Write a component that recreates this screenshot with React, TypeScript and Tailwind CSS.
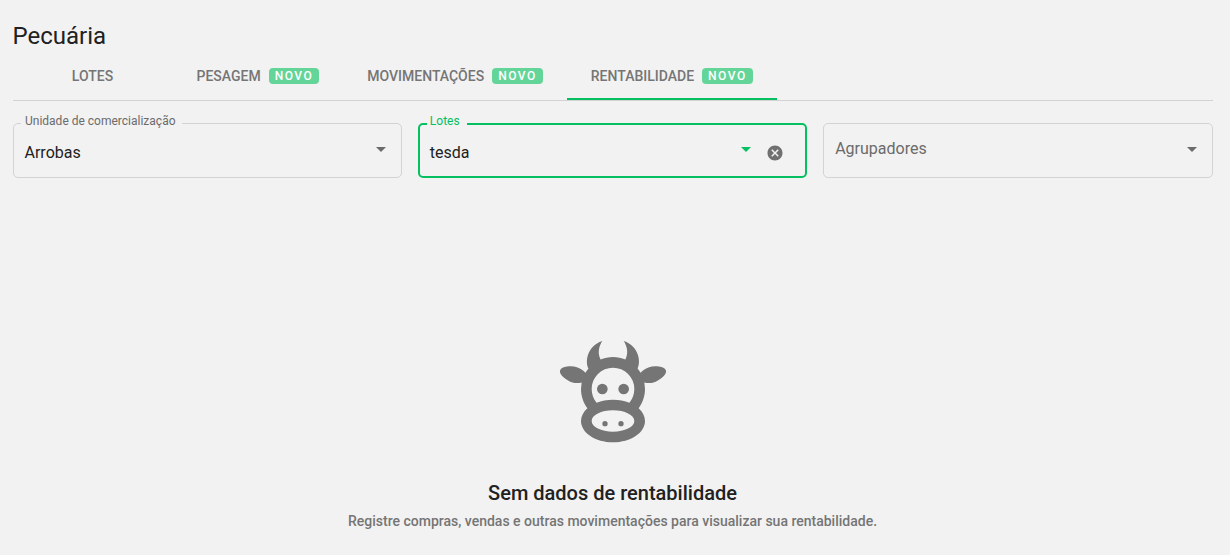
import clsx from "clsx";

const COW_PATH =
	"M10.5,18A0.5,0.5 0 0,1 11,18.5A0.5,0.5 0 0,1 10.5,19A0.5,0.5 0 0,1 10,18.5A0.5,0.5 0 0,1 10.5,18M13.5,18A0.5,0.5 0 0,1 14,18.5A0.5,0.5 0 0,1 13.5,19A0.5,0.5 0 0,1 13,18.5A0.5,0.5 0 0,1 13.5,18M10,11A1,1 0 0,1 11,12A1,1 0 0,1 10,13A1,1 0 0,1 9,12A1,1 0 0,1 10,11M14,11A1,1 0 0,1 15,12A1,1 0 0,1 14,13A1,1 0 0,1 13,12A1,1 0 0,1 14,11M18,18C18,20.21 15.31,22 12,22C8.69,22 6,20.21 6,18C6,17.1 6.45,16.27 7.2,15.6C6.45,14.6 6,13.35 6,12L6.12,10.78C5.58,10.93 4.93,10.93 4.4,10.78C3.38,10.5 1.84,9.35 2.07,8.55C2.3,7.75 4.21,7.6 5.23,7.9C5.82,8.07 6.45,8.5 6.82,8.96L7.39,8.15C6.79,7.05 7,4 10,3L9.91,3.14V3.14C9.63,3.58 8.91,4.97 9.67,6.47C10.39,6.17 11.17,6 12,6C12.83,6 13.61,6.17 14.33,6.47C15.09,4.97 14.37,3.58 14.09,3.14L14,3C17,4 17.21,7.05 16.61,8.15L17.18,8.96C17.55,8.5 18.18,8.07 18.77,7.9C19.79,7.6 21.7,7.75 21.93,8.55C22.16,9.35 20.62,10.5 19.6,10.78C19.07,10.93 18.42,10.93 17.88,10.78L18,12C18,13.35 17.55,14.6 16.8,15.6C17.55,16.27 18,17.1 18,18M12,16C9.79,16 8,16.9 8,18C8,19.1 9.79,20 12,20C14.21,20 16,19.1 16,18C16,16.9 14.21,16 12,16M12,14C13.12,14 14.17,14.21 15.07,14.56C15.65,13.87 16,13 16,12A4,4 0 0,0 12,8A4,4 0 0,0 8,12C8,13 8.35,13.87 8.93,14.56C9.83,14.21 10.88,14 12,14Z";

const tabs = [
	{ label: "LOTES", isNew: false, width: "w-40" },
	{ label: "PESAGEM", isNew: true, width: "w-[170.75px]" },
	{ label: "MOVIMENTAÇÕES", isNew: true, width: "w-[223.5px]" },
	{ label: "RENTABILIDADE", isNew: true, width: "w-[210px]" },
];

function Tabs({ active }: { active: string }) {
	return (
		<nav className="flex h-[49px] border-b border-[#d3d3d3]">
			{tabs.map((tab) => (
				<button
					key={tab.label}
					type="button"
					className={clsx(
						"flex h-12 shrink-0 items-center justify-center border-b-2 pt-0.5 text-sm font-medium text-[#757575]",
						tab.width,
						tab.label === active ? "border-[#05c061]" : "border-transparent",
					)}
				>
					{tab.label}
					{tab.isNew && (
						<span className="ml-2 flex h-4 items-center rounded bg-[#64d598] px-1.5 text-xs font-medium tracking-[1.5px] text-white">
							NOVO
						</span>
					)}
				</button>
			))}
		</nav>
	);
}

function Arrow({ className }: { className?: string }) {
	return (
		<svg viewBox="0 0 10 5" className={clsx("h-[5px] w-2.5 shrink-0 fill-current", className)}>
			<path d="M0 0h10L5 5z" />
		</svg>
	);
}

function SelectField({
	label,
	value,
	focused,
	clearable,
}: {
	label: string;
	value?: string;
	focused?: boolean;
	clearable?: boolean;
}) {
	return (
		<div
			className={clsx(
				"relative flex h-[55px] items-center rounded-[5px]",
				focused
					? "border-2 border-[#05c061] pl-2.5 text-[#05c061]"
					: "border border-[#d3d3d3] pl-[11px] text-[#6b6b6b]",
			)}
		>
			{value ? (
				<>
					{/* Floating label, cuts a notch in the outline */}
					<span
						className={clsx(
							"absolute left-[7px] bg-[#f2f2f2] text-xs leading-4",
							focused ? "-top-3 pr-[7px] pl-[3px]" : "-top-[11px] pr-[6px] pl-[4.5px]",
						)}
					>
						{label}
					</span>
					<span className="mt-[5px] flex-1 text-base leading-5 text-[#212121]">{value}</span>
				</>
			) : (
				<span className="-mt-1 flex-1 text-base leading-5">{label}</span>
			)}
			<Arrow className={clsx("-mt-[3px]", clearable ? "mr-4" : "mr-[15px]")} />
			{clearable && (
				<svg viewBox="1.33 1.33 21.33 21.33" className="mt-[5px] mr-[22px] size-4 fill-[#707070]">
					<path d="M12 2C6.47 2 2 6.47 2 12s4.47 10 10 10 10-4.47 10-10S17.53 2 12 2zm5 13.59L15.59 17 12 13.41 8.41 17 7 15.59 10.59 12 7 8.41 8.41 7 12 10.59 15.59 7 17 8.41 13.41 12 17 15.59z" />
				</svg>
			)}
		</div>
	);
}

function EmptyState() {
	return (
		<section className="mt-[147px] flex flex-col items-center text-center">
			<svg viewBox="0 0 24 24" className="size-32 fill-[#757575]">
				<path d={COW_PATH} />
			</svg>
			<h2 className="mt-[26px] text-xl leading-7 font-medium text-[#212121]">Sem dados de rentabilidade</h2>
			<p className="mt-1 text-sm leading-5 font-medium text-[#757575]">
				Registre compras, vendas e outras movimentações para visualizar sua rentabilidade.
			</p>
		</section>
	);
}

export default function App() {
	return (
		<main className="h-screen overflow-hidden bg-[#f2f2f2] pt-5 pr-[17.5px] pl-[12.5px] font-[Roboto,sans-serif]">
			<h1 className="text-2xl leading-8 text-[#212121]">Pecuária</h1>
			<Tabs active="RENTABILIDADE" />
			<div className="mt-[22px] grid grid-cols-3 gap-4">
				<SelectField label="Unidade de comercialização" value="Arrobas" />
				<SelectField label="Lotes" value="tesda" focused clearable />
				<SelectField label="Agrupadores" />
			</div>
			<EmptyState />
		</main>
	);
}
